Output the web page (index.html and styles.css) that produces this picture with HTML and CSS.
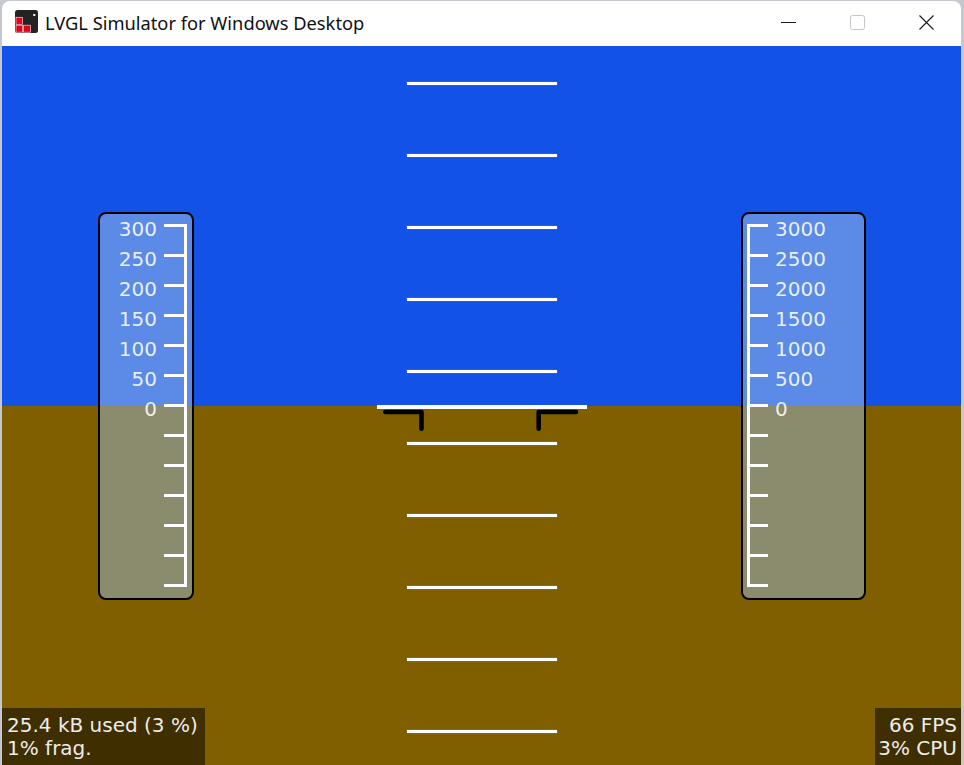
FILE: index.html
```html
<!DOCTYPE html>
<html lang="en">
<head>
<meta charset="utf-8">
<title>LVGL Simulator for Windows Desktop</title>
<link rel="stylesheet" href="styles.css">
</head>
<body>
<div class="window">
  <header class="titlebar">
    <svg class="app-icon" viewBox="0 0 23 23" width="23" height="23" aria-hidden="true">
      <rect width="23" height="23" rx="2.5" fill="#232323"/>
      <rect x="1" y="7.3" width="6.5" height="7" fill="#e2001a" stroke="#f4d0d0" stroke-width="0.7"/>
      <rect x="1" y="15.2" width="6.5" height="7" fill="#e2001a" stroke="#f4d0d0" stroke-width="0.7"/>
      <rect x="8.4" y="15.2" width="7" height="7" fill="#e2001a" stroke="#f4d0d0" stroke-width="0.7"/>
      <rect x="18.3" y="4" width="2" height="2" fill="#fff"/>
    </svg>
    <span class="title">LVGL Simulator for Windows Desktop</span>
    <div class="caption-buttons">
      <span class="cap-btn">
        <svg viewBox="0 0 15 15" width="15" height="15"><line x1="0" y1="7.5" x2="15" y2="7.5" stroke="#1a1a1a" stroke-width="1"/></svg>
      </span>
      <span class="cap-btn">
        <svg viewBox="0 0 15 15" width="15" height="15"><rect x="0.5" y="0.5" width="14" height="14" rx="2" fill="none" stroke="#c6c6c6" stroke-width="1"/></svg>
      </span>
      <span class="cap-btn">
        <svg viewBox="0 0 15 15" width="15" height="15"><path d="M0.5 0.5 L14.5 14.5 M14.5 0.5 L0.5 14.5" stroke="#1a1a1a" stroke-width="1.1" fill="none"/></svg>
      </span>
    </div>
  </header>

  <main class="screen">
    <div class="gauge gauge-left">
      <div class="scale scale-left">
        <div class="row"><span class="label">300</span><span class="tick"></span></div>
        <div class="row"><span class="label">250</span><span class="tick"></span></div>
        <div class="row"><span class="label">200</span><span class="tick"></span></div>
        <div class="row"><span class="label">150</span><span class="tick"></span></div>
        <div class="row"><span class="label">100</span><span class="tick"></span></div>
        <div class="row"><span class="label">50</span><span class="tick"></span></div>
        <div class="row"><span class="label">0</span><span class="tick"></span></div>
        <div class="row"><span class="tick"></span></div>
        <div class="row"><span class="tick"></span></div>
        <div class="row"><span class="tick"></span></div>
        <div class="row"><span class="tick"></span></div>
        <div class="row"><span class="tick"></span></div>
        <div class="row"><span class="tick"></span></div>
      </div>
    </div>

    <div class="ladder">
      <div class="rungs">
        <span class="rung"></span>
        <span class="rung"></span>
        <span class="rung"></span>
        <span class="rung"></span>
        <span class="rung"></span>
      </div>
      <div class="horizon">
        <svg class="aircraft" viewBox="0 0 210 30" width="210" height="30" aria-hidden="true">
          <polyline points="8.3,7 44.5,7 44.5,23.8" fill="none" stroke="#000" stroke-width="4.6" stroke-linecap="round" stroke-linejoin="round"/>
          <polyline points="199,7 161.7,7 161.7,23.8" fill="none" stroke="#000" stroke-width="4.6" stroke-linecap="round" stroke-linejoin="round"/>
        </svg>
      </div>
      <div class="rungs">
        <span class="rung"></span>
        <span class="rung"></span>
        <span class="rung"></span>
        <span class="rung"></span>
        <span class="rung"></span>
      </div>
    </div>

    <div class="gauge gauge-right">
      <div class="scale scale-right">
        <div class="row"><span class="tick"></span><span class="label">3000</span></div>
        <div class="row"><span class="tick"></span><span class="label">2500</span></div>
        <div class="row"><span class="tick"></span><span class="label">2000</span></div>
        <div class="row"><span class="tick"></span><span class="label">1500</span></div>
        <div class="row"><span class="tick"></span><span class="label">1000</span></div>
        <div class="row"><span class="tick"></span><span class="label">500</span></div>
        <div class="row"><span class="tick"></span><span class="label">0</span></div>
        <div class="row"><span class="tick"></span></div>
        <div class="row"><span class="tick"></span></div>
        <div class="row"><span class="tick"></span></div>
        <div class="row"><span class="tick"></span></div>
        <div class="row"><span class="tick"></span></div>
        <div class="row"><span class="tick"></span></div>
      </div>
    </div>

    <div class="perf perf-left">25.4 kB used (3 %)<br>1% frag.</div>
    <div class="perf perf-right">66 FPS<br>3% CPU</div>
  </main>
</div>
</body>
</html>
```

FILE: styles.css
```css
* {
  box-sizing: border-box;
}

html,
body {
  margin: 0;
  height: 100%;
}

body {
  background: #c5c8ce;
  overflow: hidden;
  font-family: "DejaVu Sans", "Liberation Sans", sans-serif;
}

.window {
  margin: 1px 0 0 2px;
  width: 959px;
  height: 764px;
  background: #fff;
  border-radius: 8px 8px 0 0;
  overflow: hidden;
  display: flex;
  flex-direction: column;
}

/* ---------- title bar ---------- */
.titlebar {
  flex: none;
  height: 45px;
  display: flex;
  align-items: center;
  padding-left: 13px;
}

.app-icon {
  flex: none;
  align-self: flex-start;
  margin-top: 9px;
}

.title {
  margin-left: 7px;
  margin-bottom: 2px;
  font-family: "Noto Sans", "Open Sans", sans-serif;
  font-size: 18.3px;
  color: #111;
  white-space: nowrap;
}

.caption-buttons {
  margin-left: auto;
  display: flex;
  height: 100%;
}

.cap-btn {
  width: 69px;
  display: flex;
  align-items: center;
  justify-content: center;
  padding-bottom: 2px;
}

.cap-btn svg {
  display: block;
}

/* ---------- LVGL screen ---------- */
.screen {
  position: relative;
  flex: 1;
  background: linear-gradient(to bottom, #1352e6 0, #1352e6 360px, #7f5f00 360px, #7f5f00 100%);
  display: grid;
  grid-template-columns: 1fr auto 1fr;
  align-items: start;
}

.gauge {
  margin-top: 166px;
  height: 388px;
  border: 2px solid #000;
  border-radius: 8px;
  background: linear-gradient(to bottom, #5b8be6 0, #5b8be6 192px, #8b8c6e 192px, #8b8c6e 100%);
  display: flex;
}

.gauge-left {
  justify-self: start;
  margin-left: 96px;
  width: 96px;
  padding: 10px 5px 0 0;
  justify-content: flex-end;
}

.gauge-right {
  justify-self: end;
  margin-right: 95px;
  width: 125px;
  padding: 10px 0 0 4px;
  justify-content: flex-start;
}

.scale {
  height: 363px;
  display: flex;
  flex-direction: column;
  justify-content: space-between;
}

.scale-left {
  border-right: 3px solid #fff;
}

.scale-right {
  border-left: 3px solid #fff;
}

.row {
  height: 3px;
  display: flex;
  align-items: center;
  gap: 7px;
}

.scale-left .row {
  justify-content: flex-end;
}

.scale-right .row {
  justify-content: flex-start;
}

.tick {
  flex: none;
  width: 20px;
  height: 3px;
  background: #fff;
}

.scale-right .tick {
  width: 18px;
}

.label {
  font-size: 20px;
  line-height: 20px;
  padding-top: 6px;
  color: rgba(255, 255, 255, 0.88);
  white-space: nowrap;
}

/* ---------- pitch ladder ---------- */
.ladder {
  width: 210px;
  display: flex;
  flex-direction: column;
  align-items: center;
  padding-top: 36px;
}

.rungs {
  display: flex;
  flex-direction: column;
  gap: 69px;
}

.rung {
  display: block;
  width: 150px;
  height: 3px;
  background: #fff;
  box-shadow: 0 0 1px rgba(255, 255, 255, 0.7);
}

.horizon {
  position: relative;
  width: 210px;
  height: 4px;
  margin: 32px 0 33px;
  background: #fff;
}

.aircraft {
  position: absolute;
  left: 0;
  top: 0;
  overflow: visible;
}

/* ---------- performance monitors ---------- */
.perf {
  position: absolute;
  bottom: 0;
  background: rgba(0, 0, 0, 0.5);
  color: #ececec;
  font-size: 20px;
  line-height: 23px;
  white-space: nowrap;
}

.perf-left {
  left: 0;
  padding: 6px 7px 5px 5px;
}

.perf-right {
  right: 0;
  text-align: right;
  padding: 6px 4px 5px 3px;
}
```
